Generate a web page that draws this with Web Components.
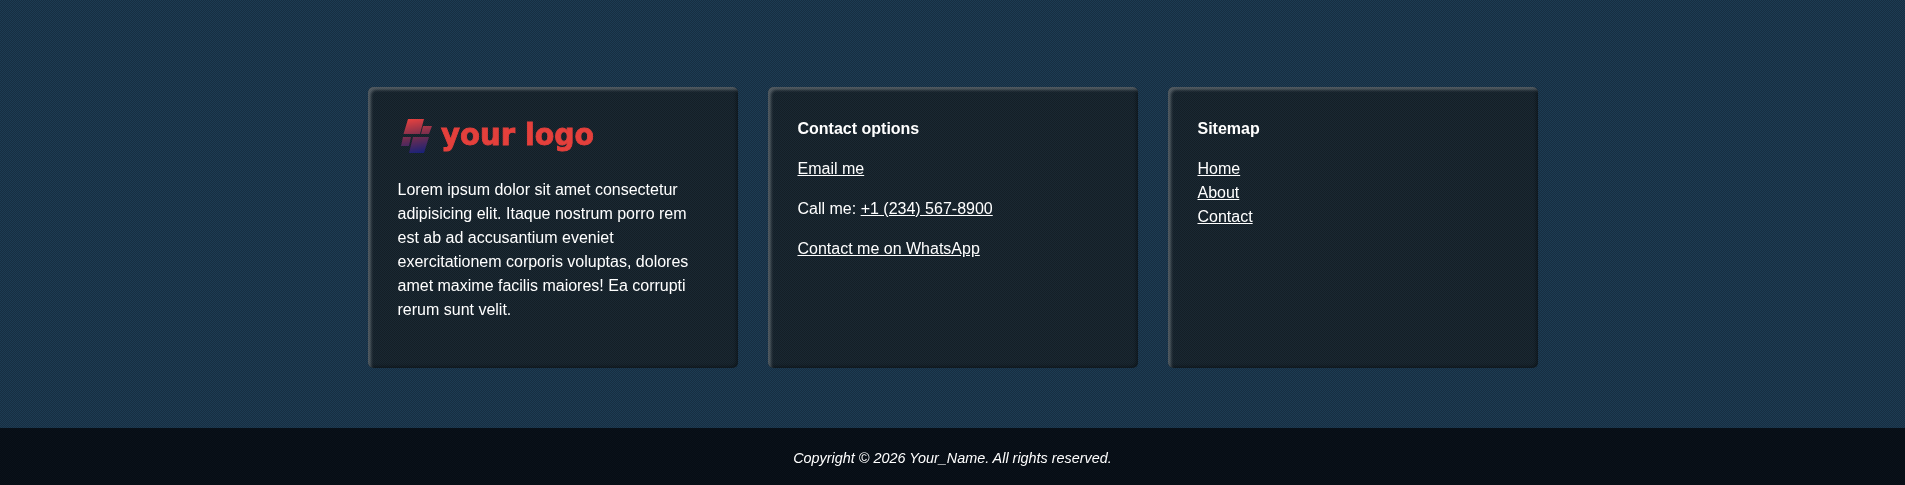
<!DOCTYPE html>
<html>
<head>
<meta charset="utf-8">
<title>Footer</title>
<style>
  :root {
    /* fine dither that sits on every surface of the page */
    --dots: conic-gradient(rgba(0,0,0,.22) 25%, transparent 0 50%, rgba(0,0,0,.22) 0 75%, transparent 0);
  }
  html, body { margin: 0; padding: 0; }
  body {
    background: #1d3b53 var(--dots) 0 0 / 2px 2px;
    color: #fff;
    font-family: "Liberation Sans", Arial, sans-serif;
    font-size: 16px;
    line-height: 24px;
  }
  a { color: inherit; }
  .title { font-weight: bold; margin-bottom: 16px; }
  .row { margin-bottom: 16px; }
</style>
</head>
<body>

<template id="site-footer-tmpl">
  <style>
    :host { display: block; }
    .columns {
      display: grid;
      grid-template-columns: repeat(3, 370px);
      gap: 30px;
      justify-content: center;
      padding: 87px 0 60px;
    }
    .bottom {
      background: #09111a var(--dots) 0 0 / 2px 2px;
      height: 57px;
      display: flex;
      align-items: center;
      justify-content: center;
    }
  </style>
  <div class="columns"><slot></slot></div>
  <div class="bottom"><slot name="copyright"></slot></div>
</template>

<template id="footer-card-tmpl">
  <style>
    :host {
      display: block;
      box-sizing: border-box;
      height: 281px;
      padding: 30px;
      background: #1a2832 var(--dots) 0 0 / 2px 2px;
      border-radius: 5px;
      box-shadow: inset 3px 3px 3px rgba(255,255,255,.25), inset -2px -2px 3px rgba(0,0,0,.3);
    }
    /* own layer, so the text gets greyscale antialiasing like the reference */
    .inner { will-change: opacity; }
  </style>
  <div class="inner"><slot></slot></div>
</template>

<template id="brand-logo-tmpl">
  <style>
    :host { display: block; height: 44px; margin-bottom: 16px; }
    svg { display: block; }
    text {
      font-family: "DejaVu Sans", sans-serif;
      font-weight: bold;
      font-size: 30px;
      fill: #e4403c;
      stroke: #e4403c;
      stroke-width: .9px;
    }
  </style>
  <svg width="230" height="44" viewBox="0 0 230 44">
    <defs>
      <linearGradient id="g" gradientUnits="userSpaceOnUse" x1="16" y1="2" x2="22" y2="36">
        <stop offset="0" stop-color="#e2403f"/>
        <stop offset="0.55" stop-color="#6b2c50"/>
        <stop offset="1" stop-color="#1a2278"/>
      </linearGradient>
    </defs>
    <path fill="url(#g)" d="M10 2h16l-4 15H5.500zM25 9h9l-3 8h-8zM5 20h8l-2 9H3zM15 20h16l-5 16H11z"/>
    <text y="28"><tspan x="43" textLength="74" lengthAdjust="spacingAndGlyphs">your</tspan> <tspan x="127" textLength="69" lengthAdjust="spacingAndGlyphs">logo</tspan></text>
  </svg>
</template>

<template id="copy-line-tmpl">
  <style>
    :host { display: block; font-style: italic; font-size: 14.4px; color: #fff; padding-top: 2px; will-change: opacity; }
  </style>
  <slot></slot>
</template>

<site-footer>
  <footer-card>
    <brand-logo></brand-logo>
    <div class="row" style="padding-top:1px">Lorem ipsum dolor sit amet consectetur adipisicing elit. Itaque nostrum porro rem est ab ad accusantium eveniet exercitationem corporis voluptas, dolores amet maxime facilis maiores! Ea corrupti rerum sunt velit.</div>
  </footer-card>
  <footer-card>
    <div class="title">Contact options</div>
    <div class="row"><a href="#">Email me</a></div>
    <div class="row">Call me: <a href="#">+1 (234) 567-8900</a></div>
    <div class="row"><a href="#">Contact me on WhatsApp</a></div>
  </footer-card>
  <footer-card>
    <div class="title">Sitemap</div>
    <div><a href="#">Home</a></div>
    <div><a href="#">About</a></div>
    <div><a href="#">Contact</a></div>
  </footer-card>
  <copy-line slot="copyright">Copyright © 2026 Your_Name. All rights reserved.</copy-line>
</site-footer>

<script>
  // Each element just clones its template into an open shadow root
  function register(name, tmplId) {
    customElements.define(name, class extends HTMLElement {
      constructor() {
        super();
        const shadowRoot = this.attachShadow({mode: 'open'});
        shadowRoot.appendChild(document.getElementById(tmplId).content.cloneNode(true));
      }
    });
  }
  register('site-footer', 'site-footer-tmpl');
  register('footer-card', 'footer-card-tmpl');
  register('brand-logo', 'brand-logo-tmpl');
  register('copy-line', 'copy-line-tmpl');
</script>
</body>
</html>
